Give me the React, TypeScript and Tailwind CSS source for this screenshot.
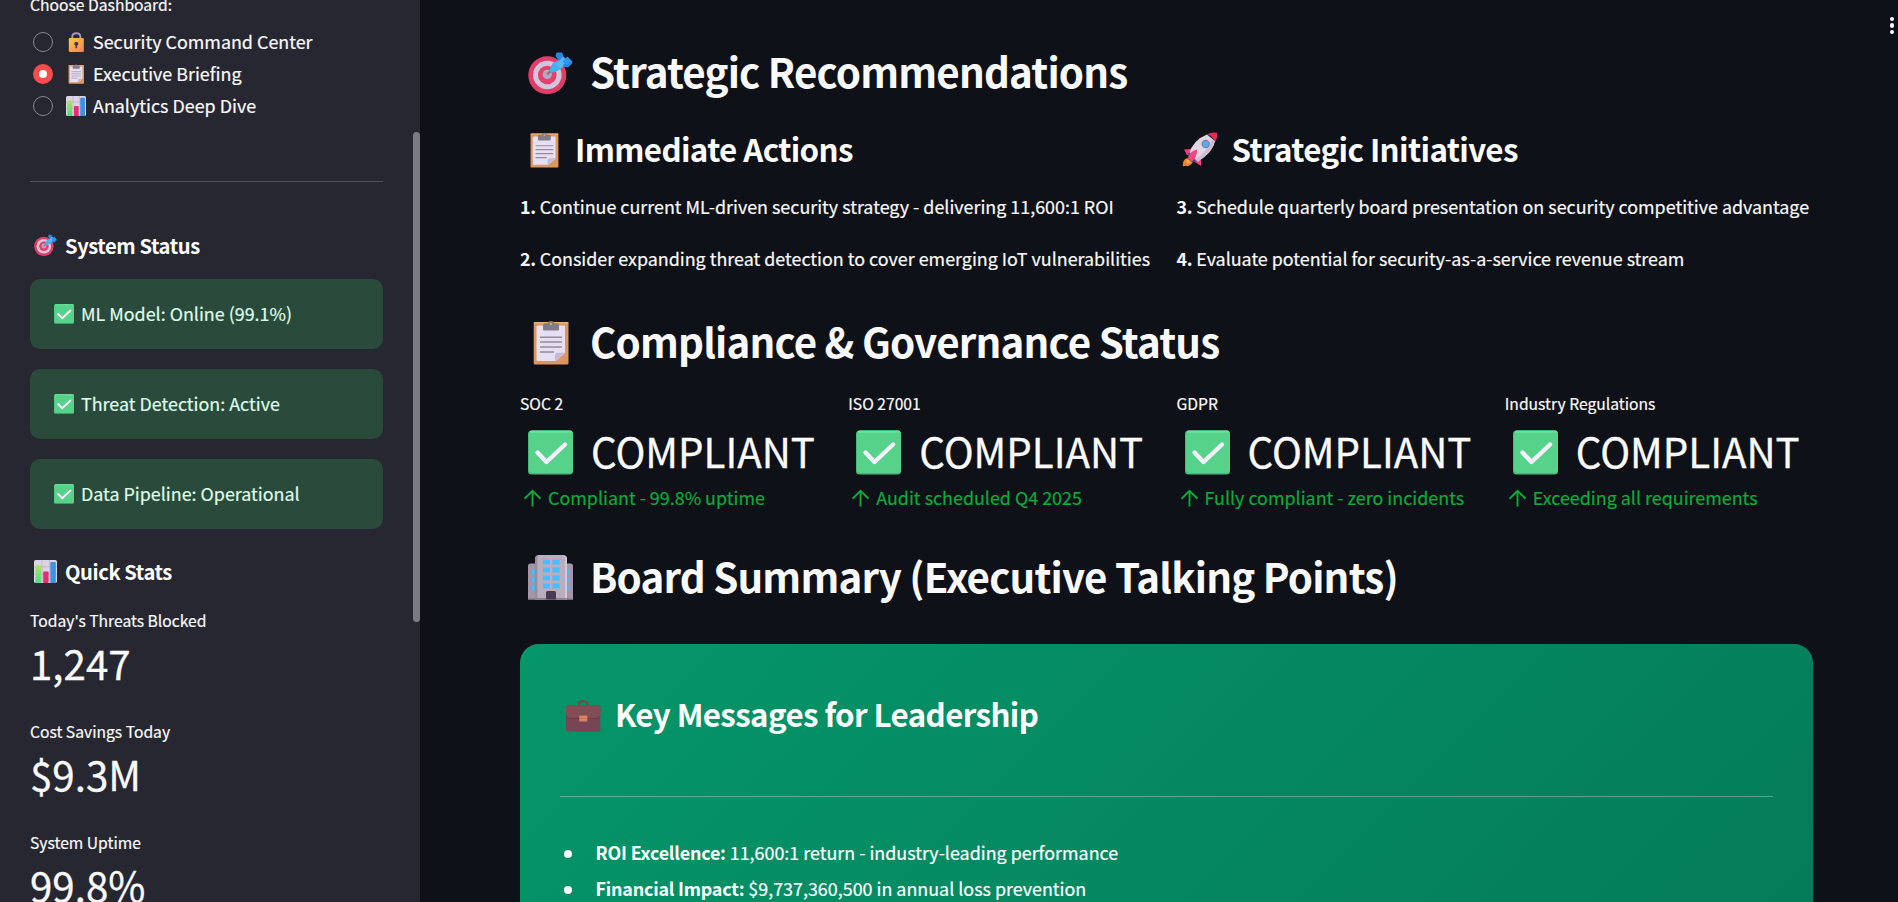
import type { ReactNode } from "react";

type IconProps = { className?: string };

function TargetIcon({ className }: IconProps) {
  return (
    <svg viewBox="0 0 45 45" className={className}>
      <circle cx="19.3" cy="24.2" r="19" fill="#e33c69" />
      <circle cx="19.3" cy="24" r="14.3" fill="#d1c6dc" />
      <circle cx="19.3" cy="24" r="9.300" fill="#e83e6b" />
      <circle cx="19.3" cy="23.500" r="4.700" fill="#b3a8c0" />
      <path d="M19 23.500 L26 17" stroke="#7f7690" strokeWidth="2" />
      <path d="M31 9 L37 15 L31 19 Q24.500 23 22.200 20.500 Q21 17 25 12 Z" fill="#45b1f3" />
      <path d="M32 11 L27.500 5 L28.500 1.500 L34 1.500 L36 6 L44.500 12 L40 16.500 L35 15.500 Z" fill="#2787e6" />
      <path d="M28 14 L34.500 5.500 L39 10 L32.500 17 Z" fill="#55b9f5" />
      <path d="M34.500 10.500 L39.500 5.500 L44.800 11 L38 13.500 Z" fill="#3296ec" />
    </svg>
  );
}

function ClipboardIcon({ className }: IconProps) {
  return (
    <svg viewBox="0 0 45 45" className={className}>
      <rect x="5.700" y="2" width="34.800" height="42.500" rx="1.500" fill="#dd9660" />
      <rect x="5.700" y="2" width="34.800" height="1.500" rx=".7" fill="#f0b070" />
      <path d="M9.500 5.500 H37 V33 L28 41 H9.500 Q8.500 41 8.500 40 V6.500 Z" fill="#e6dff2" />
      <path d="M27 41.500 V35 Q27 33 29 33 L37 32.500 Z" fill="#c5b8d4" />
      <path d="M15 9.500 V5 Q15 3.300 17 3.300 H20 Q20 1 23 1 Q26 1 26 3.300 H29 Q31 3.300 31 5 V9.500 Q31 10.500 30 10.500 H16 Q15 10.500 15 9.500Z" fill="#857a86" />
      <circle cx="23" cy="4" r="1.200" fill="#c9a58c" />
      <path d="M12 17.200 H34 M12 22 H34 M12 27 H34 M12 32 H26" stroke="#958a9c" strokeWidth="1.400" />
    </svg>
  );
}

function CheckIcon({ className }: IconProps) {
  return (
    <svg viewBox="0 0 45 45" className={className}>
      <rect x="0" y=".5" width="45" height="44" rx="3.500" fill="#48b97c" />
      <rect x="1" y=".5" width="44" height="42.500" rx="3.500" fill="#57d28b" />
      <rect x="2" y=".7" width="42" height="2" rx="1" fill="#66e59c" />
      <path d="M9.500 22.500 L18.500 32 L37 14.500" fill="none" stroke="#f6f1fb" strokeWidth="4.400" strokeLinecap="round" strokeLinejoin="round" />
    </svg>
  );
}

function BuildingIcon({ className }: IconProps) {
  return (
    <svg viewBox="0 0 45 45" className={className}>
      <path d="M0 44.500 V11 Q0 8.500 2.500 8.500 H42.500 Q45 8.500 45 11 V44.500 Z" fill="#a397a6" />
      <path d="M7 44.500 V4 Q7 0 11 0 H35 Q39 0 39 4 V44.500 Z" fill="#b9aebd" />
      <path d="M35.500 .5 Q39 1 39 4 V44.500 H37 V3 Z" fill="#d3c3dc" />
      <path d="M7 4 Q7 1 9.500 .4 V44.500 H7 Z" fill="#9a8f9e" />
      <path d="M0 43.800 H45" stroke="#8f8496" strokeWidth="1.400" />
      <g fill="#4cbcff">
        <path d="M15 4.500h7v5h-7z M24.500 4.500h7v5h-7z M15 12.500h7v5h-7z M24.500 12.500h7v5h-7z M15 20.500h7v5h-7z M24.500 20.500h7v5h-7z M15 28.500h7v5h-7z M24.500 28.500h7v5h-7z" />
        <path d="M4 14.500h3v5h-3z M4 22.500h3v5h-3z M4 30.500h3v5h-3z M39 14.500h3v5h-3z M39 22.500h3v5h-3z M39 30.500h3v5h-3z" />
      </g>
      <path d="M18 44.500 V37.500 Q18 36 19.500 36 H26.500 Q28 36 28 37.500 V44.500 Z" fill="#4b3a56" />
    </svg>
  );
}

function RocketIcon({ className }: IconProps) {
  return (
    <svg viewBox="0 0 36 36" className={className}>
      <path d="M7 26 Q2 26 1 31 Q.3 34 1 34.300 Q1.500 34.500 2.500 34 L4 33.500 L4.500 34.300 Q10 33.500 11 29 Z" fill="#f0872f" />
      <path d="M4 28 Q7 27 8.500 30 Q7 32 5 31.500 Z" fill="#ffb03b" />
      <path d="M9 17 L2 17.500 L5 23 L9 24 Z" fill="#ee3f7e" />
      <path d="M19 27 L19 34 L13 30 L10 27 Z" fill="#ee3f7e" />
      <path d="M7 22 Q11 8 25 2.500 L33 9 Q31 20 16 29.500 Z" fill="#e2d6e4" />
      <path d="M33 9 Q31 20 16 29.500 L13.500 27.500 Q26 19 30 7 Z" fill="#cbbfd6" />
      <path d="M25 2.300 Q30 -.2 35 .8 Q35.800 5 33.300 10 Q30 3.500 25 2.300 Z" fill="#e6294f" />
      <circle cx="23.700" cy="12" r="4.200" fill="#8279a5" />
      <circle cx="23.700" cy="12" r="3" fill="#51aef5" />
      <path d="M7 20 L5.500 26.500 L10 30 L14.500 29.500 L10 25 Z" fill="#4d3f86" />
      <path d="M6 26.500 Q7.500 19 15 17.500 Q15.500 25 10 29.500 Z" fill="#f2447d" />
    </svg>
  );
}

function BriefcaseIcon({ className }: IconProps) {
  return (
    <svg viewBox="0 0 36 36" className={className}>
      <path d="M13.500 7.500 V6 Q14.500 3 18 3 Q21.500 3 22.500 6 V7.500" fill="none" stroke="#7a4344" strokeWidth="2" />
      <rect x="1" y="7.500" width="34.300" height="26" rx="1.500" fill="#774656" />
      <path d="M1 9 Q1 7.500 2.500 7.500 H34 Q35.300 7.500 35.300 9 V17.500 Q34 20.500 30 20.500 H6 Q2 20.500 1 17.500 Z" fill="#834d56" />
      <path d="M1 17.500 Q2 20.500 6 20.500 H30 Q34 20.500 35.300 17.500" fill="none" stroke="#653a49" strokeWidth=".8" />
      <rect x="14.300" y="17.500" width="8" height="6" rx=".6" fill="#dc8264" />
      <path d="M14.300 20.500 H22.300" stroke="#c0694f" strokeWidth=".6" />
    </svg>
  );
}

function LockIcon({ className }: IconProps) {
  return (
    <svg viewBox="0 0 20 20" className={className}>
      <defs>
        <linearGradient id="lock" x1="0" y1="0" x2="1" y2="1">
          <stop offset="0" stopColor="#ffc93d" />
          <stop offset="1" stopColor="#f9835a" />
        </linearGradient>
      </defs>
      <path d="M6.300 7 V4.500 Q6.300 1.200 10.300 1.200 Q14.300 1.200 14.300 4.500 V7" fill="none" stroke="#a59bb0" strokeWidth="1.900" />
      <rect x="2.800" y="6" width="15" height="14" rx="1.200" fill="url(#lock)" />
      <circle cx="10.300" cy="11.700" r="2" fill="#4a3557" />
      <rect x="9.500" y="12" width="1.600" height="4.300" rx=".6" fill="#4a3557" />
    </svg>
  );
}

function ChartIcon({ className }: IconProps) {
  return (
    <svg viewBox="0 0 20 20" className={className}>
      <defs>
        <linearGradient id="bar" x1="0" y1="0" x2="0" y2="1">
          <stop offset="0" stopColor="#b1e35c" />
          <stop offset="1" stopColor="#4fdb84" />
        </linearGradient>
      </defs>
      <rect width="20" height="20" rx="1.500" fill="#dcd4e4" />
      <path d="M0 6 H20 M0 12.500 H20 M7 0 V20 M13.500 0 V20" stroke="#b9aec4" strokeWidth=".6" />
      <rect x="1.300" y="4.500" width="4.800" height="15.500" rx=".6" fill="url(#bar)" />
      <rect x="8" y="10" width="4.700" height="10" rx=".6" fill="#e32f6c" />
      <rect x="14.200" y="1.800" width="4.800" height="18.200" rx=".6" fill="#3a93e8" />
    </svg>
  );
}

function ArrowUpIcon() {
  return (
    <svg viewBox="0 0 24 24" className="mt-[2px] size-6 shrink-0" fill="none" stroke="#09ab3b" strokeWidth="1.900">
      <path d="M12.500 20.500 V5.500 M4.500 12.700 L12.500 4.800 L20.500 12.700" />
    </svg>
  );
}

function SectionHeading({ icon, children }: { icon: ReactNode; children: ReactNode }) {
  return (
    <h2 className="flex h-[54px] items-center gap-[17px] pl-2 text-[40.3px] font-bold tracking-[-0.82px] whitespace-nowrap text-[#fafafa] [-webkit-text-stroke:0]">
      {icon}
      <span className="leading-[54px]">{children}</span>
    </h2>
  );
}

function SubHeading({ icon, children }: { icon: ReactNode; children: ReactNode }) {
  return (
    <h3 className="flex h-[42px] items-center gap-[13px] pl-[6px] text-[31.3px] font-bold tracking-[-0.61px] whitespace-nowrap [-webkit-text-stroke:0]">
      {icon}
      <span className="leading-[42px]">{children}</span>
    </h3>
  );
}

function SideHeading({ icon, children }: { icon: ReactNode; children: ReactNode }) {
  return (
    <h3 className="flex h-[27px] items-center gap-2 pl-1 text-[20.15px] leading-[27px] font-bold tracking-[-0.42px] [-webkit-text-stroke:0]">
      {icon}
      <span>{children}</span>
    </h3>
  );
}

function RadioOption({ icon, label, selected }: { icon: ReactNode; label: string; selected?: boolean }) {
  return (
    <label className="flex h-8 items-center pl-[3px] text-[17.9px] text-[#fafafa]">
      {selected ? (
        <span className="flex size-5 items-center justify-center rounded-full bg-[#ff4b4b]">
          <span className="size-[7.5px] rounded-full bg-white" />
        </span>
      ) : (
        <span className="size-5 rounded-full border border-[#85868d] bg-[#262730]" />
      )}
      <span className="mr-2 ml-[13px]">{icon}</span>
      <span className="-ml-px pb-[2px] leading-[30px]">{label}</span>
    </label>
  );
}

function StatusCard({ children }: { children: ReactNode }) {
  return (
    <div className="flex h-[70px] items-center gap-[7px] rounded-[10px] bg-[#2a4a3b] pl-6 text-[17.9px] text-[#dffde9]">
      <CheckIcon className="size-5" />
      <span className="pb-[2px]">{children}</span>
    </div>
  );
}

function Stat({ label, value }: { label: string; value: string }) {
  return (
    <div className="h-[111px] text-[#fafafa]">
      <div className="h-[28px] text-[15.67px] leading-[28px]">{label}</div>
      <div className="text-[40.3px] leading-[56px] [-webkit-text-stroke:0.3px]">{value}</div>
    </div>
  );
}

function ComplianceMetric({ label, delta }: { label: string; delta: string }) {
  return (
    <div className="text-[#fafafa]">
      <div className="h-7 text-[15.67px] leading-7">{label}</div>
      <div className="mt-[5px] flex h-14 items-center gap-[18px] pl-2 text-[40.3px] leading-[56px] [-webkit-text-stroke:0.3px]">
        <CheckIcon className="mt-[2px] size-[45px] shrink-0" />
        COMPLIANT
      </div>
      <div className="mt-[3px] mb-px flex h-[30px] items-center gap-1 text-[17.9px] leading-[30px] whitespace-nowrap text-[#09ab3b]">
        <ArrowUpIcon />
        {delta}
      </div>
    </div>
  );
}

function Recommendation({ number, children }: { number: string; children: ReactNode }) {
  return (
    <p className="text-[17.9px] leading-8 whitespace-nowrap text-[#fafafa]">
      <b className="tracking-[-0.3px] [-webkit-text-stroke:0]">{number}.</b> {children}
    </p>
  );
}

function KeyMessage({ title, children }: { title: string; children: ReactNode }) {
  return (
    <li className="flex h-9 items-center text-[17.9px] leading-9 whitespace-nowrap">
      <span className="mt-1 mr-[24px] ml-1 size-[7.5px] rounded-full bg-white" />
      <strong className="mr-1 tracking-[-0.2px] [-webkit-text-stroke:0]">{title}</strong>
      {children}
    </li>
  );
}

export default function App() {
  return (
    <div className="flex h-[902px] w-full overflow-hidden bg-[#0e1117] font-['Noto_Sans_CJK_SC','Noto_Sans',sans-serif] text-white [-webkit-text-stroke:0.2px]">
      <aside className="relative w-[420px] shrink-0 overflow-hidden bg-[#262730] pr-[37px] pl-[30px]">
        <div className="-mt-[10px] h-[30px] text-[15.67px] leading-[30px] text-[#fafafa]">Choose Dashboard:</div>
        <div className="mt-[6px]">
          <RadioOption icon={<LockIcon className="size-5" />} label="Security Command Center" />
          <RadioOption selected icon={<ClipboardIcon className="size-5" />} label="Executive Briefing" />
          <RadioOption icon={<ChartIcon className="size-5" />} label="Analytics Deep Dive" />
        </div>
        <hr className="mt-[59px] border-t border-[#50515a]" />
        <div className="mt-[50px]">
          <SideHeading icon={<TargetIcon className="-mt-px size-[23px]" />}>System Status</SideHeading>
        </div>
        <div className="mt-5 flex flex-col gap-5">
          <StatusCard>ML Model: Online (99.1%)</StatusCard>
          <StatusCard>Threat Detection: Active</StatusCard>
          <StatusCard>Data Pipeline: Operational</StatusCard>
        </div>
        <div className="mt-[29px]">
          <SideHeading icon={<ChartIcon className="size-[23px]" />}>Quick Stats</SideHeading>
        </div>
        <div className="mt-[22px]">
          <Stat label="Today's Threats Blocked" value="1,247" />
          <Stat label="Cost Savings Today" value="$9.3M" />
          <Stat label="System Uptime" value="99.8%" />
        </div>
        <div className="absolute top-[132px] right-0 h-[490px] w-[7px] rounded-full bg-[#7c7a82]" />
      </aside>

      <main className="relative min-w-0 flex-1 overflow-hidden pt-[44px] pr-[85px] pl-[100px]">
        <div className="absolute top-[17px] right-[4px] flex flex-col gap-[2.2px]">
          <span className="size-[4.2px] rounded-full bg-[#fafafa]" />
          <span className="size-[4.2px] rounded-full bg-[#fafafa]" />
          <span className="size-[4.2px] rounded-full bg-[#fafafa]" />
        </div>

        <SectionHeading icon={<TargetIcon className="mt-[4px] size-[45px]" />}>Strategic Recommendations</SectionHeading>

        <div className="mt-[30px] grid grid-cols-2 gap-5">
          <section>
            <SubHeading icon={<ClipboardIcon className="mt-[2px] size-9" />}>Immediate Actions</SubHeading>
            <div className="mt-5 flex flex-col gap-5">
              <Recommendation number="1">Continue current ML-driven security strategy - delivering 11,600:1 ROI</Recommendation>
              <Recommendation number="2">Consider expanding threat detection to cover emerging IoT vulnerabilities</Recommendation>
            </div>
          </section>
          <section>
            <SubHeading icon={<RocketIcon className="mt-[2px] mr-px -ml-px size-9" />}>Strategic Initiatives</SubHeading>
            <div className="mt-5 flex flex-col gap-5">
              <Recommendation number="3">Schedule quarterly board presentation on security competitive advantage</Recommendation>
              <Recommendation number="4">Evaluate potential for security-as-a-service revenue stream</Recommendation>
            </div>
          </section>
        </div>

        <div className="mt-10">
          <SectionHeading icon={<ClipboardIcon className="mt-[3px] size-[45px]" />}>Compliance &amp; Governance Status</SectionHeading>
        </div>
        <div className="mt-[22px] grid grid-cols-4 gap-5">
          <ComplianceMetric label="SOC 2" delta="Compliant - 99.8% uptime" />
          <ComplianceMetric label="ISO 27001" delta="Audit scheduled Q4 2025" />
          <ComplianceMetric label="GDPR" delta="Fully compliant - zero incidents" />
          <ComplianceMetric label="Industry Regulations" delta="Exceeding all requirements" />
        </div>

        <div className="mt-9">
          <SectionHeading icon={<BuildingIcon className="mt-[2px] size-[45px]" />}>Board Summary (Executive Talking Points)</SectionHeading>
        </div>

        <section className="mt-[41px] h-[480px] rounded-[18.75px] bg-[linear-gradient(135deg,#059669_0%,#047857_100%)] px-10 pt-[49px]">
          <SubHeading icon={<BriefcaseIcon className="mt-[3px] mr-px -ml-px size-9" />}>Key Messages for Leadership</SubHeading>
          <hr className="mt-[61px] border-t border-white/30" />
          <ul className="mt-[37px]">
            <KeyMessage title="ROI Excellence:">11,600:1 return - industry-leading performance</KeyMessage>
            <KeyMessage title="Financial Impact:">$9,737,360,500 in annual loss prevention</KeyMessage>
          </ul>
        </section>
      </main>
    </div>
  );
}
